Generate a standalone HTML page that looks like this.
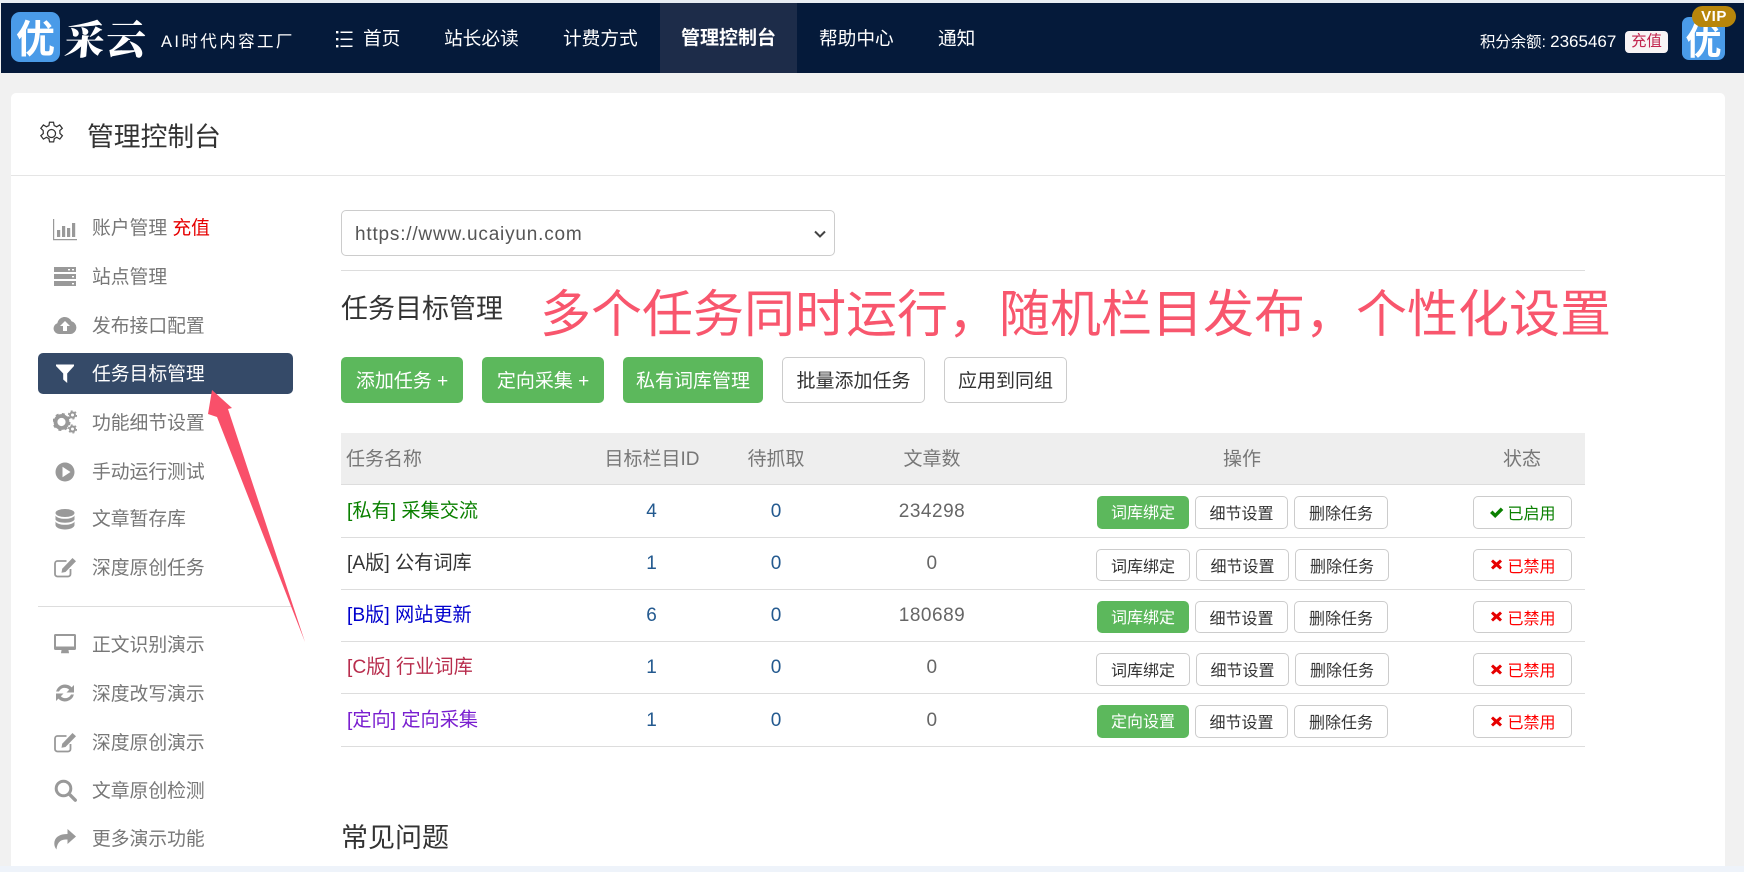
<!DOCTYPE html>
<html lang="zh-CN">
<head>
<meta charset="utf-8">
<title>管理控制台</title>
<style>
*{box-sizing:border-box;margin:0;padding:0}
html,body{width:1744px;height:872px;overflow:hidden;background:#f1f1f1}
body{position:relative;font-family:"Liberation Sans","Noto Sans CJK SC",sans-serif;color:#333}
.a{position:absolute}
.t{position:absolute;white-space:nowrap;line-height:30px;height:30px}
.c{transform:translateX(-50%)}
.n{font-size:18.7px;color:#fff}
.s{font-size:18.8px;color:#777;left:92px}
.i{position:absolute;left:53px;width:24px;height:24px;fill:#999}
.b{position:absolute;display:flex;align-items:center;justify-content:center;white-space:nowrap;border:1px solid #ccc;border-radius:5px;background:#fff;color:#333}
.g{background:#5cb85c;border-color:#5cb85c;color:#fff}
.m{font-size:19px;top:357px;height:46px;padding-bottom:2px}
.o{font-size:16px;padding-bottom:1px}
.o.g{padding-bottom:3px}
.th{font-size:19px;color:#777;top:445px}
.r{font-size:19.2px;left:347px}
.d{font-size:19px;color:#23598f}
.e{font-size:19px;color:#666;letter-spacing:.5px}
.h{position:absolute;left:341px;width:1244px;height:1px;background:#ddd}
.st{gap:3px}
</style>
</head>
<body>
<div class="a" style="left:0;top:0;width:1744px;height:3px;background:#e8edf3"></div>
<div class="a" style="left:1px;top:3px;width:1743px;height:70px;background:#051a3a"></div>
<div class="a" style="left:660px;top:3px;width:137px;height:70px;background:#1d2c49"></div>

<div class="a" style="left:11px;top:12px;width:49px;height:50px;background:#4a9be8;border-radius:9px;color:#fff;font:bold 39px/50px 'Noto Sans CJK SC',sans-serif;text-align:center">优</div>
<div class="t" style="left:65px;top:20px;line-height:36px;height:36px;font:900 40px/36px 'Noto Serif CJK SC',serif;color:#fff;letter-spacing:1px;transform:skewX(-5deg)">采云</div>
<div class="t" style="left:161px;top:27px;font-size:16.5px;color:#fff;letter-spacing:2.4px">AI时代内容工厂</div>

<svg class="a" style="left:336px;top:29px" width="17" height="20" viewBox="0 0 17 20"><g fill="#fff"><rect x="0" y="2" width="2.4" height="2.4"/><rect x="0" y="9" width="2.4" height="2.4"/><rect x="0" y="16" width="2.4" height="2.4"/><rect x="4.5" y="2.5" width="12" height="1.5"/><rect x="4.5" y="9.5" width="12" height="1.5"/><rect x="4.5" y="16.5" width="12" height="1.5"/></g></svg>
<div class="t n" style="left:363px;top:24px">首页</div>
<div class="t n" style="left:444px;top:24px">站长必读</div>
<div class="t n" style="left:563px;top:24px">计费方式</div>
<div class="t n" style="left:681px;top:24px;font-weight:bold;font-size:19px">管理控制台</div>
<div class="t n" style="left:819px;top:24px">帮助中心</div>
<div class="t n" style="left:938px;top:24px">通知</div>

<div class="t" style="left:1480px;top:27px;font-size:15.4px;color:#fff">积分余额: <span style="font-size:17px">2365467</span></div>
<div class="a" style="left:1625px;top:31px;width:43px;height:22px;background:#f8f4f5;border-radius:4px;color:#c2254f;font-size:15.4px;line-height:22px;text-align:center">充值</div>
<div class="a" style="left:1682px;top:17px;width:43px;height:43px;background:#4a9be8;border-radius:7px;color:#fff;font:bold 36px/44px 'Noto Sans CJK SC',sans-serif;text-align:center">优</div>
<div class="a" style="left:1692px;top:6px;width:44px;height:21px;background:#b8860b;border-radius:11px;color:#fff;font:bold 15px/21px 'Liberation Sans',sans-serif;text-align:center;letter-spacing:.5px">VIP</div>

<div class="a" style="left:0;top:866px;width:1744px;height:6px;background:#eef3fa"></div>
<div class="a" style="left:11px;top:93px;width:1714px;height:773px;background:#fff;border-radius:5px 5px 0 0"></div>
<div class="a" style="left:11px;top:175px;width:1714px;height:1px;background:#e5e5e5"></div>

<svg class="a" style="left:38px;top:120px" width="27" height="27" viewBox="0 0 24 24" fill="none" stroke="#333" stroke-width="1.1"><circle cx="12" cy="12" r="3.6"/><path d="M10.2 2h3.6l.6 3 2.2 1 2.700-1.600 2.300 3-2.200 2 .1 2.600 2.200 2-2.300 3-2.700-1.600-2.200 1.100-.6 2.900h-3.600l-.6-2.900-2.200-1.100-2.700 1.600-2.300-3 2.200-2-.1-2.600-2.100-2 2.300-3 2.700 1.600 2.200-1z"/></svg>
<div class="t" style="left:87px;top:122px;font-size:26.8px;color:#333">管理控制台</div>

<!-- Sidebar -->
<div class="a" style="left:38px;top:353px;width:255px;height:41px;background:#354a68;border-radius:5px"></div>

<svg class="i" style="top:217px" viewBox="0 0 24 24"><path d="M0 2h1.200v20H24v1.200H0z"/><rect x="4" y="13" width="3.200" height="7"/><rect x="9" y="9" width="3.200" height="11"/><rect x="14" y="11" width="3.200" height="9"/><rect x="19" y="6" width="3.200" height="14"/></svg>
<div class="t s" style="top:213px">账户管理 <span style="color:#e60000">充值</span></div>

<svg class="i" style="top:264px" viewBox="0 0 24 24"><path d="M1 3h22v5H1zM1 10h22v5H1zM1 17h22v5H1z"/><g fill="#fff"><rect x="15" y="5" width="2" height="1.400"/><rect x="19" y="5" width="2" height="1.400"/><rect x="19" y="12" width="2" height="1.400"/><rect x="19" y="19" width="2" height="1.400"/></g></svg>
<div class="t s" style="top:262px">站点管理</div>

<svg class="i" style="top:313px" viewBox="0 0 24 24"><path d="M6 21a5.500 5.500 0 0 1-1.700-10.700A7.500 7.500 0 0 1 18.500 8.300A6.500 6.500 0 0 1 18 21z"/><path fill="#fff" d="M12 8l5 5h-3v5h-4v-5H7z"/></svg>
<div class="t s" style="top:311px">发布接口配置</div>

<svg class="i" style="top:361px;fill:#fff" viewBox="0 0 24 24"><path d="M3 3.500h18v1.500l-6.800 7.500V22l-4-3.500v-6L3 5z"/></svg>
<div class="t s" style="top:359px;color:#fff">任务目标管理</div>

<svg class="i" style="top:410px" viewBox="0 0 24 24"><circle cx="8.500" cy="12" r="6" fill="none" stroke="#999" stroke-width="3.800"/><circle cx="8.500" cy="12" r="8" fill="none" stroke="#999" stroke-width="2" stroke-dasharray="3 3.300"/><circle cx="19.500" cy="5" r="2.500" fill="none" stroke="#999" stroke-width="2"/><circle cx="19.500" cy="5" r="4" fill="none" stroke="#999" stroke-width="1.200" stroke-dasharray="2 2.200"/><circle cx="19.500" cy="19" r="2.500" fill="none" stroke="#999" stroke-width="2"/><circle cx="19.500" cy="19" r="4" fill="none" stroke="#999" stroke-width="1.200" stroke-dasharray="2 2.200"/></svg>
<div class="t s" style="top:408px">功能细节设置</div>

<svg class="i" style="top:460px" viewBox="0 0 24 24"><circle cx="12" cy="12" r="9.500"/><path fill="#fff" d="M9.500 6.800v10.400l8-5.200z"/></svg>
<div class="t s" style="top:457px">手动运行测试</div>

<svg class="i" style="top:507px;height:26px" viewBox="0 0 24 24"><ellipse cx="12" cy="5" rx="9.500" ry="4"/><path d="M2.500 7.500c1 2 4.500 3.300 9.500 3.300s8.500-1.300 9.500-3.300v4c-1 2-4.500 3.200-9.500 3.200S3.500 13.500 2.500 11.500z"/><path d="M2.500 13.500c1 2 4.500 3.300 9.500 3.300s8.500-1.300 9.500-3.300v3.500c0 2.500-4.500 4.500-9.500 4.500S2.500 19.500 2.500 17z"/></svg>
<div class="t s" style="top:504px">文章暂存库</div>

<svg class="i" style="top:555px" viewBox="0 0 24 24"><path fill="none" stroke="#999" stroke-width="1.800" d="M17.500 14v5a2.500 2.500 0 0 1-2.500 2.500H4.500A2.500 2.500 0 0 1 2 19V8.500A2.500 2.500 0 0 1 4.500 6h9"/><path d="M19.500 3l3.500 3.200-10.500 10.800-4 .8.700-4z"/></svg>
<div class="t s" style="top:553px">深度原创任务</div>

<div class="a" style="left:38px;top:606px;width:255px;height:1px;background:#ddd"></div>

<svg class="i" style="top:632px" viewBox="0 0 24 24"><path fill-rule="evenodd" d="M2.500 2h19A1.500 1.500 0 0 1 23 3.500v13a1.500 1.500 0 0 1-1.500 1.500h-19A1.500 1.500 0 0 1 1 16.500v-13A1.500 1.500 0 0 1 2.500 2zM3 4v10.500h18V4z"/><path d="M8.500 18h7l.5 3.300H8z"/></svg>
<div class="t s" style="top:630px">正文识别演示</div>

<svg class="i" style="top:681px" viewBox="0 0 24 24"><path d="M12 3.500c2.700 0 5 1.100 6.600 2.900L21 4v7.500h-7.500l2.700-2.700a6.200 6.200 0 0 0-10.200 1.700H3.100A9.200 9.200 0 0 1 12 3.500zM3 12.500h7.500l-2.700 2.700a6.200 6.200 0 0 0 10.200-1.700h2.900A9.200 9.200 0 0 1 5.400 17.600L3 20z"/></svg>
<div class="t s" style="top:679px">深度改写演示</div>

<svg class="i" style="top:730px" viewBox="0 0 24 24"><path fill="none" stroke="#999" stroke-width="1.800" d="M17.500 14v5a2.500 2.500 0 0 1-2.500 2.500H4.500A2.500 2.500 0 0 1 2 19V8.500A2.500 2.500 0 0 1 4.500 6h9"/><path d="M19.500 3l3.500 3.200-10.500 10.800-4 .8.700-4z"/></svg>
<div class="t s" style="top:728px">深度原创演示</div>

<svg class="i" style="top:778px" viewBox="0 0 24 24"><circle cx="10.500" cy="10.500" r="7.300" fill="none" stroke="#999" stroke-width="3"/><path d="M15.500 17.800l2.400-2.400 5.600 5.600a1.700 1.700 0 0 1-2.400 2.400z"/></svg>
<div class="t s" style="top:776px">文章原创检测</div>

<svg class="i" style="top:826px" viewBox="0 0 24 24"><path d="M14.500 3L23 10.500l-8.500 7.500v-4.500C9 13.500 4.500 14.500 3.500 23.500 1.500 21 1 18.500 1.500 15.500 2.800 10 8 8 14.500 8z"/></svg>
<div class="t s" style="top:824px">更多演示功能</div>

<!-- Main -->
<div class="a" style="left:341px;top:210px;width:494px;height:46px;border:1px solid #ccc;border-radius:5px;background:#fff"></div>
<div class="t" style="left:355px;top:220px;font-size:19px;letter-spacing:.8px;color:#555">https://www.ucaiyun.com</div>
<svg class="a" style="left:813px;top:229px" width="14" height="10" viewBox="0 0 14 10" fill="none" stroke="#444" stroke-width="2"><path d="M2 2.500l5 5 5-5"/></svg>

<div class="h" style="top:270px"></div>
<div class="t" style="left:341px;top:294px;font-size:27px;color:#333">任务目标管理</div>
<div class="t" style="left:540px;top:285px;line-height:60px;height:60px;font-size:51px;color:#f8566d">多个任务同时运行，随机栏目发布，个性化设置</div>

<div class="b g m" style="left:341px;width:122px">添加任务 +</div>
<div class="b g m" style="left:482px;width:122px">定向采集 +</div>
<div class="b g m" style="left:623px;width:140px">私有词库管理</div>
<div class="b m" style="left:782px;width:143px">批量添加任务</div>
<div class="b m" style="left:944px;width:123px">应用到同组</div>

<!-- Table -->
<div class="a" style="left:341px;top:433px;width:1244px;height:51px;background:#eee"></div>
<div class="h" style="top:484px"></div>
<div class="h" style="top:537px"></div>
<div class="h" style="top:589px"></div>
<div class="h" style="top:641px"></div>
<div class="h" style="top:693px"></div>
<div class="h" style="top:746px"></div>

<div class="t th" style="left:346px">任务名称</div>
<div class="t th c" style="left:652px">目标栏目ID</div>
<div class="t th c" style="left:776px">待抓取</div>
<div class="t th c" style="left:932px">文章数</div>
<div class="t th c" style="left:1242px">操作</div>
<div class="t th c" style="left:1522px">状态</div>

<div class="t r" style="top:497px;color:#0a8000">[私有] 采集交流</div>
<div class="t r" style="top:549px;color:#333">[A版] 公有词库</div>
<div class="t r" style="top:601px;color:#0000cd">[B版] 网站更新</div>
<div class="t r" style="top:653px;color:#b82d4d">[C版] 行业词库</div>
<div class="t r" style="top:706px;color:#7a1fd0">[定向] 定向采集</div>

<div class="t d c" style="left:651.500px;top:497px">4</div><div class="t d c" style="left:776px;top:497px">0</div><div class="t e c" style="left:932px;top:497px">234298</div>
<div class="t d c" style="left:651.500px;top:549px">1</div><div class="t d c" style="left:776px;top:549px">0</div><div class="t e c" style="left:932px;top:549px">0</div>
<div class="t d c" style="left:651.500px;top:601px">6</div><div class="t d c" style="left:776px;top:601px">0</div><div class="t e c" style="left:932px;top:601px">180689</div>
<div class="t d c" style="left:651.500px;top:653px">1</div><div class="t d c" style="left:776px;top:653px">0</div><div class="t e c" style="left:932px;top:653px">0</div>
<div class="t d c" style="left:651.500px;top:706px">1</div><div class="t d c" style="left:776px;top:706px">0</div><div class="t e c" style="left:932px;top:706px">0</div>

<div class="b g o" style="left:1097px;top:496px;width:92px;height:33px">词库绑定</div>
<div class="b o" style="left:1195px;top:496px;width:93px;height:33px">细节设置</div>
<div class="b o" style="left:1294px;top:496px;width:94px;height:33px">删除任务</div>
<div class="b o st" style="left:1473px;top:496px;width:99px;height:33px;color:#0a8000"><svg width="15" height="13" viewBox="0 0 15 13"><path fill="#0a8000" d="M1 7l2.500-2.500 2.700 2.700L11.800 1.500 14.300 4 6.200 12z"/></svg>已启用</div>

<div class="b o" style="left:1096px;top:549px;width:94px;height:32px">词库绑定</div>
<div class="b o" style="left:1196px;top:549px;width:93px;height:32px">细节设置</div>
<div class="b o" style="left:1295px;top:549px;width:94px;height:32px">删除任务</div>
<div class="b o st" style="left:1473px;top:549px;width:99px;height:32px;color:#f00"><svg width="15" height="13" viewBox="0 0 15 13"><path fill="#e60000" d="M2 3.500L4 1.500l3.500 3 3.500-3 2 2-3 3 3 3-2 2-3.500-3-3.500 3-2-2 3-3z"/></svg>已禁用</div>

<div class="b g o" style="left:1097px;top:601px;width:92px;height:32px">词库绑定</div>
<div class="b o" style="left:1195px;top:601px;width:93px;height:32px">细节设置</div>
<div class="b o" style="left:1294px;top:601px;width:94px;height:32px">删除任务</div>
<div class="b o st" style="left:1473px;top:601px;width:99px;height:32px;color:#f00"><svg width="15" height="13" viewBox="0 0 15 13"><path fill="#e60000" d="M2 3.500L4 1.500l3.500 3 3.500-3 2 2-3 3 3 3-2 2-3.500-3-3.500 3-2-2 3-3z"/></svg>已禁用</div>

<div class="b o" style="left:1096px;top:653px;width:94px;height:33px">词库绑定</div>
<div class="b o" style="left:1196px;top:653px;width:93px;height:33px">细节设置</div>
<div class="b o" style="left:1295px;top:653px;width:94px;height:33px">删除任务</div>
<div class="b o st" style="left:1473px;top:653px;width:99px;height:33px;color:#f00"><svg width="15" height="13" viewBox="0 0 15 13"><path fill="#e60000" d="M2 3.500L4 1.500l3.500 3 3.500-3 2 2-3 3 3 3-2 2-3.500-3-3.500 3-2-2 3-3z"/></svg>已禁用</div>

<div class="b g o" style="left:1097px;top:705px;width:92px;height:33px">定向设置</div>
<div class="b o" style="left:1195px;top:705px;width:93px;height:33px">细节设置</div>
<div class="b o" style="left:1294px;top:705px;width:94px;height:33px">删除任务</div>
<div class="b o st" style="left:1473px;top:705px;width:99px;height:33px;color:#f00"><svg width="15" height="13" viewBox="0 0 15 13"><path fill="#e60000" d="M2 3.500L4 1.500l3.500 3 3.500-3 2 2-3 3 3 3-2 2-3.500-3-3.500 3-2-2 3-3z"/></svg>已禁用</div>

<div class="t" style="left:341px;top:823px;font-size:27px;color:#333">常见问题</div>

<!-- Arrow -->
<svg class="a" style="left:0;top:0" width="1744" height="872"><polygon fill="#f9506a" points="212,390 232,408 228,409 305,642 217,417 208,414"/></svg>
</body>
</html>
